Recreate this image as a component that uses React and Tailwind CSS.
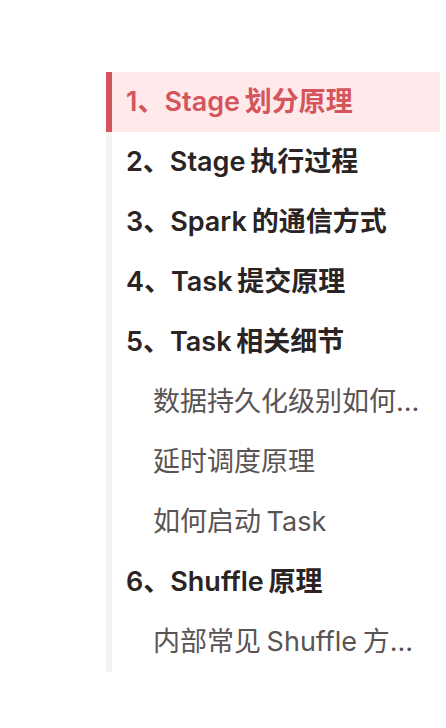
import React from "react";

const outline = [
  { id: "s1", label: "1、Stage 划分原理", level: 1 },
  { id: "s2", label: "2、Stage 执行过程", level: 1 },
  { id: "s3", label: "3、Spark 的通信方式", level: 1 },
  { id: "s4", label: "4、Task 提交原理", level: 1 },
  { id: "s5", label: "5、Task 相关细节", level: 1 },
  { id: "s5-1", label: "数据持久化级别如何选择", level: 2 },
  { id: "s5-2", label: "延时调度原理", level: 2 },
  { id: "s5-3", label: "如何启动 Task", level: 2 },
  { id: "s6", label: "6、Shuffle 原理", level: 1 },
  { id: "s6-1", label: "内部常见 Shuffle 方式对比", level: 2 },
];

const TocItem = ({ item, active }) => {
  const base =
    "flex h-[60px] items-center border-l-[6px] text-[27px] [word-spacing:-2px]";
  const tone = active
    ? "border-[#d4555b] bg-[#ffe9ea] text-[#d4555b] font-semibold"
    : item.level === 1
    ? "border-[#f3f3f3] text-[#2a2424] font-semibold"
    : "border-[#f3f3f3] text-[#5a5353] font-normal";
  const indent = item.level === 1 ? "pl-[14px] pr-[12px]" : "pl-[41px] pr-[20px]";

  return (
    <li className={`${base} ${tone} ${indent}`}>
      <span className="block truncate leading-[1.4]">{item.label}</span>
    </li>
  );
};

export default function App() {
  const activeId = "s1";

  return (
    <div
      className="min-h-[728px] w-[446px] bg-white pt-[72px] pl-[106px]"
      style={{ fontFamily: 'Inter, "Noto Sans CJK SC", sans-serif' }}
    >
      <ul className="w-[334px]">
        {outline.map((item) => (
          <TocItem key={item.id} item={item} active={item.id === activeId} />
        ))}
      </ul>
    </div>
  );
}
